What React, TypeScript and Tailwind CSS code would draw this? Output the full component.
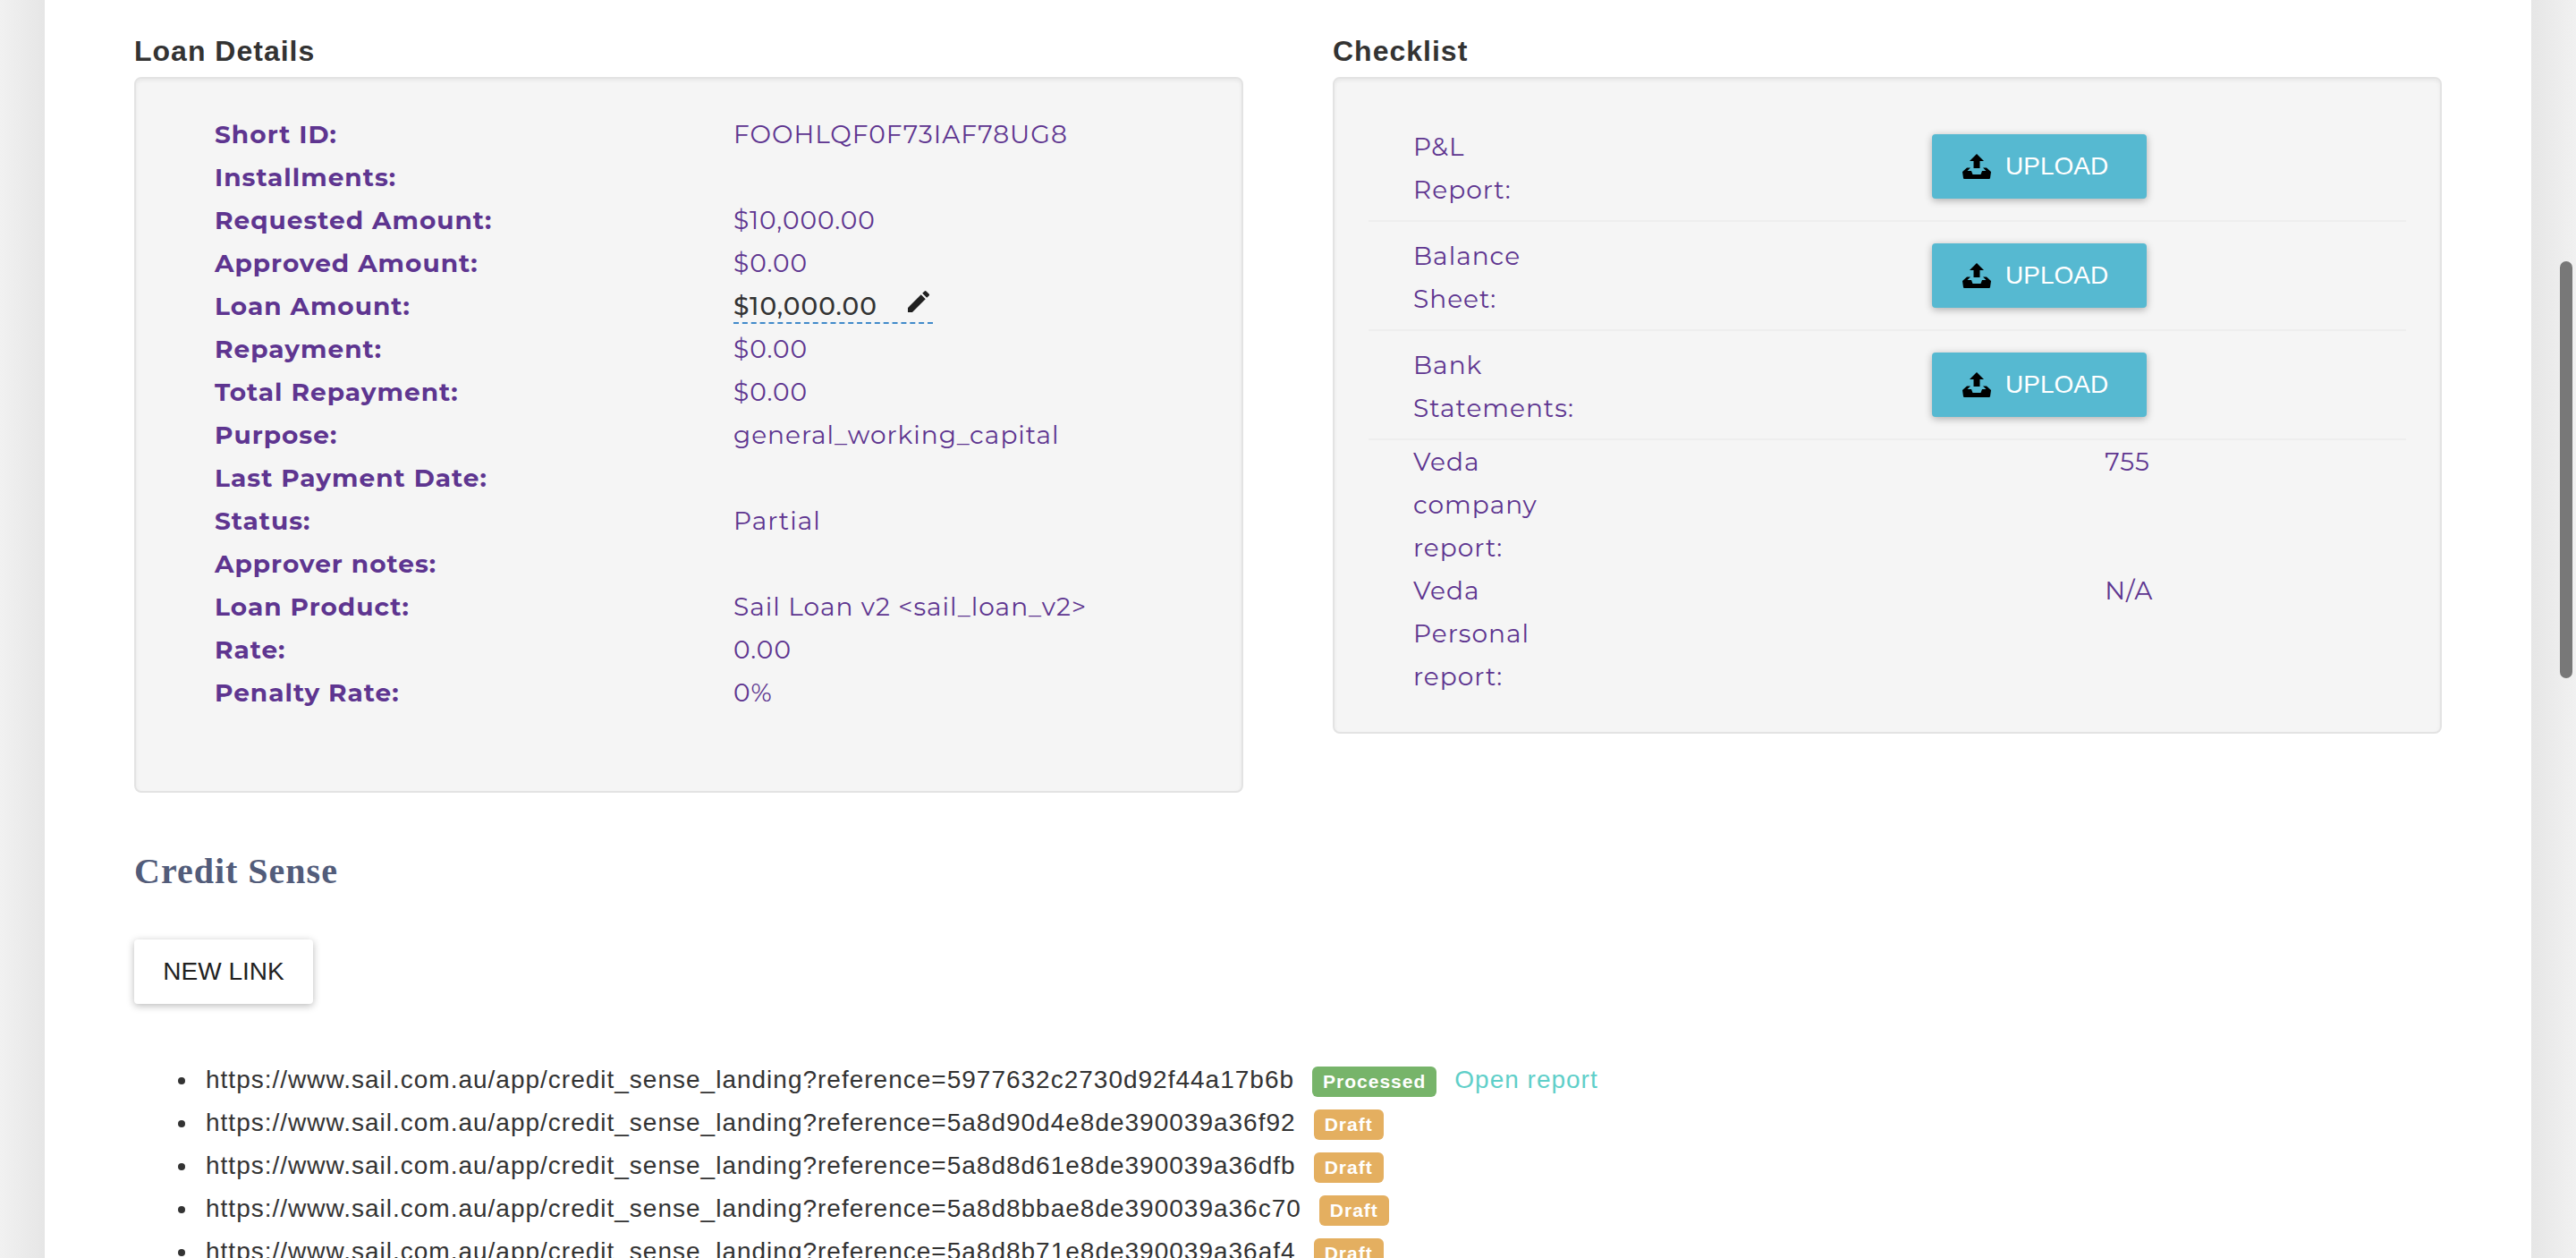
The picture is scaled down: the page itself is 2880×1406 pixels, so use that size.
import type { ReactNode } from "react";
import { MdEdit } from "react-icons/md";

const details: { label: string; value: string; editable?: boolean }[] = [
  { label: "Short ID:", value: "FOOHLQF0F73IAF78UG8" },
  { label: "Installments:", value: "" },
  { label: "Requested Amount:", value: "$10,000.00" },
  { label: "Approved Amount:", value: "$0.00" },
  { label: "Loan Amount:", value: "$10,000.00", editable: true },
  { label: "Repayment:", value: "$0.00" },
  { label: "Total Repayment:", value: "$0.00" },
  { label: "Purpose:", value: "general_working_capital" },
  { label: "Last Payment Date:", value: "" },
  { label: "Status:", value: "Partial" },
  { label: "Approver notes:", value: "" },
  { label: "Loan Product:", value: "Sail Loan v2 <sail_loan_v2>" },
  { label: "Rate:", value: "0.00" },
  { label: "Penalty Rate:", value: "0%" },
];

const uploads = ["P&L Report:", "Balance Sheet:", "Bank Statements:"];

const scores = [
  { label: "Veda company report:", value: "755" },
  { label: "Veda Personal report:", value: "N/A" },
];

const links = [
  { reference: "5977632c2730d92f44a17b6b", processed: true },
  { reference: "5a8d90d4e8de390039a36f92", processed: false },
  { reference: "5a8d8d61e8de390039a36dfb", processed: false },
  { reference: "5a8d8bbae8de390039a36c70", processed: false },
  { reference: "5a8d8b71e8de390039a36af4", processed: false },
];

function UploadIcon() {
  return (
    <svg viewBox="0 0 32 28" className="h-7 w-8 shrink-0" fill="#000" aria-hidden="true">
      <path d="M16 0l8 8h-4.500v8h-7V8H8z" />
      <path d="M5 15.500h4L5.500 19H10l1.500 4h9l1.500-4h4.500L23 15.500h4l5 4.500-1 7q-.2 1-1 1H2q-.8 0-1-1l-1-7z" />
    </svg>
  );
}

function Card({ title, children }: { title: string; children: ReactNode }) {
  return (
    <section className="min-w-0 flex-1">
      <h2 className="pb-1 pt-8 text-[32px] font-bold leading-[50px] text-[#333333]">{title}</h2>
      <div className="rounded-lg border-2 border-[#e3e3e3] bg-[#f5f5f5] p-[38px] font-['Montserrat','Inter',sans-serif] font-normal text-[#5e3590] shadow-[inset_0_2px_4px_rgba(0,0,0,0.06)]">
        {children}
      </div>
    </section>
  );
}

export default function App() {
  return (
    <div className="flex h-screen overflow-hidden bg-white font-['Liberation_Sans',Arial,sans-serif] text-[28px] leading-[48px] tracking-[1px] text-[#333333]">
      <div className="w-[50px] shrink-0 bg-linear-to-r from-[#f1f1f1] to-[#e6e6e6]" />
      <main className="min-w-0 flex-1 px-[100px]">
        <div className="flex items-start gap-[100px]">
          <Card title="Loan Details">
            <dl className="pb-12">
              {details.map((d) => (
                <div key={d.label} className="grid h-12 grid-cols-2">
                  <dt className="pl-[50px] font-bold">{d.label}</dt>
                  <dd className="pl-[50px]">
                    {d.editable ? (
                      <button
                        type="button"
                        aria-label="Edit loan amount"
                        className="flex h-11 items-center gap-[30px] border-b-2 border-dashed border-[#428bca] font-medium tracking-[1px] text-[#333333]"
                      >
                        <span className="pt-[6px]">{d.value}</span>
                        <MdEdit className="mb-1 size-8 text-[#212121]" />
                      </button>
                    ) : (
                      d.value
                    )}
                  </dd>
                </div>
              ))}
            </dl>
          </Card>
          <Card title="Checklist">
            {uploads.map((label) => (
              <div key={label} className="grid grid-cols-2 items-center border-b-2 border-[#eeeeee] py-[10px]">
                <div className="pl-[50px] pt-1">
                  <div className="w-[160px]">{label}</div>
                </div>
                <div className="pl-[50px]">
                  <button
                    type="button"
                    className="flex h-[72px] w-[240px] items-center gap-4 rounded-sm bg-[#56b9d1] pl-[34px] font-['Liberation_Sans',Arial,sans-serif] font-normal tracking-normal text-white shadow-[0_2px_8px_rgba(0,0,0,0.3)]"
                  >
                    <UploadIcon />
                    UPLOAD
                  </button>
                </div>
              </div>
            ))}
            {scores.map((s) => (
              <div key={s.label} className="grid grid-cols-3">
                <div className="col-span-2 pl-[50px]">
                  <div className="w-[160px]">{s.label}</div>
                </div>
                <div className="pl-[50px]">{s.value}</div>
              </div>
            ))}
          </Card>
        </div>

        <h1 className="pt-16 font-['Liberation_Serif','Times_New_Roman',serif] text-[40px] font-bold text-[#525c7a]">
          Credit Sense
        </h1>
        <button
          type="button"
          className="mt-[52px] flex h-[72px] min-w-[200px] items-center justify-center rounded-sm bg-white px-8 tracking-normal text-[#212121] shadow-[0_2px_8px_rgba(0,0,0,0.28)]"
        >
          NEW LINK
        </button>
        <ul className="mt-[61px] list-disc pl-[72px]">
          {links.map((l) => (
            <li key={l.reference} className="pl-2">
              <div className="flex items-center gap-5">
                <span>https://www.sail.com.au/app/credit_sense_landing?reference={l.reference}</span>
                {l.processed ? (
                  <>
                    <span className="mt-1 rounded-md bg-[#77b46a] px-3 text-[21px] font-bold leading-[34px] text-white">
                      Processed
                    </span>
                    <a href="#report" className="text-[#5fcfc9]">
                      Open report
                    </a>
                  </>
                ) : (
                  <span className="mt-1 rounded-md bg-[#e4af60] px-3 text-[21px] font-bold leading-[34px] text-white">
                    Draft
                  </span>
                )}
              </div>
            </li>
          ))}
        </ul>
      </main>
      <div className="flex w-[50px] shrink-0 justify-end bg-linear-to-r from-[#e6e6e6] to-[#f1f1f1] pr-1">
        <div className="mt-[292px] h-[466px] w-[14px] rounded-full bg-[#787878]" />
      </div>
    </div>
  );
}
